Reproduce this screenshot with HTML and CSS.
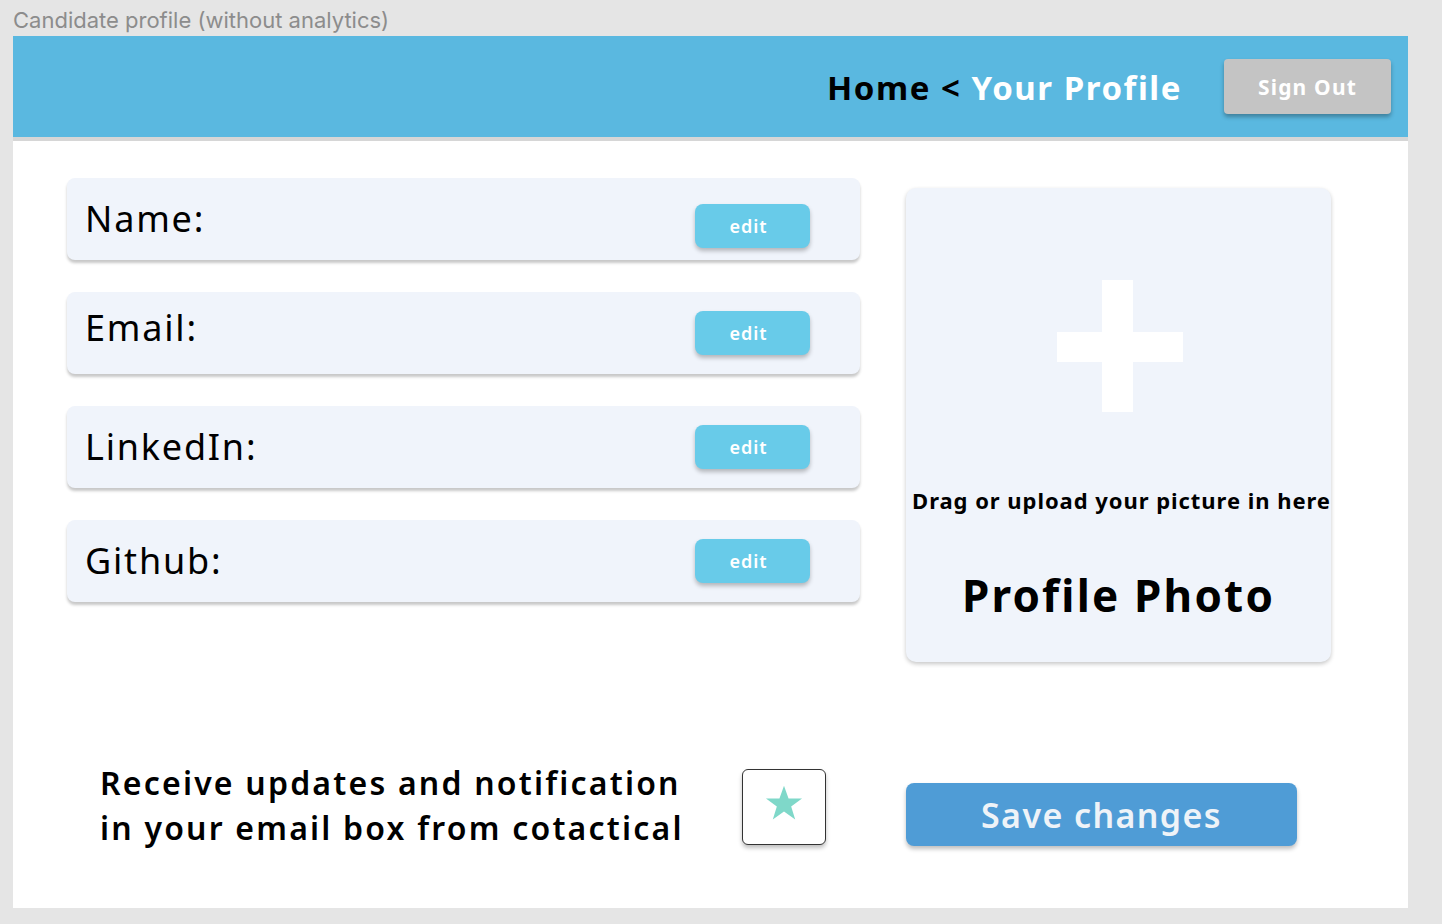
FILE: index.html
```html
<!DOCTYPE html>
<html>
<head>
<meta charset="utf-8">
<link rel="stylesheet" href="styles.css">
</head>
<body>
<div class="frame-label">Candidate profile (without analytics)</div>
<div class="frame">
  <header class="topbar">
    <nav class="crumbs"><span class="crumb-home">Home &lt;</span> <span class="crumb-current">Your Profile</span></nav>
    <button class="signout">Sign Out</button>
  </header>
  <main class="content">
    <section class="fields">
      <div class="field field-name"><span class="field-label">Name:</span><button class="edit">edit</button></div>
      <div class="field field-email"><span class="field-label">Email:</span><button class="edit">edit</button></div>
      <div class="field"><span class="field-label">LinkedIn:</span><button class="edit">edit</button></div>
      <div class="field"><span class="field-label">Github:</span><button class="edit">edit</button></div>
    </section>
    <section class="photo">
      <div class="plus"><span class="plus-v"></span><span class="plus-h"></span></div>
      <p class="photo-hint">Drag or upload your picture in here</p>
      <h2 class="photo-title">Profile Photo</h2>
    </section>
  </main>
  <footer class="bottom">
    <p class="notify">Receive updates and notification<br>in your email box from cotactical</p>
    <div class="check">
      <svg width="42" height="42" viewBox="0 0 24 24"><path d="M12 1.5l2.6 7.3h7.7l-6.2 4.6 2.3 7.4L12 16.3l-6.4 4.5 2.3-7.4L1.7 8.8h7.7z" fill="#7fd8c9"/></svg>
    </div>
    <button class="save">Save changes</button>
  </footer>
</div>
</body>
</html>
```
FILE: styles.css
```css
* { box-sizing: border-box; }
body {
  margin: 0;
  background: #e5e5e5;
  font-family: "Noto Sans", "Open Sans", sans-serif;
  width: 1442px;
  height: 924px;
  overflow: hidden;
}
.frame-label {
  height: 36px;
  padding-left: 13px;
  padding-top: 6px;
  font-family: Inter, "Noto Sans", sans-serif;
  font-size: 22px;
  color: #8c8c8c;
  line-height: 28px;
}
.frame {
  margin-left: 13px;
  width: 1395px;
  height: 872px;
  background: #ffffff;
}
.topbar {
  height: 105px;
  background: #5ab8e0;
  border-bottom: 4px solid #d6d6d6;
  display: flex;
  align-items: center;
  justify-content: flex-end;
  padding-right: 17px;
}
.crumbs {
  font-weight: 700;
  font-size: 33px;
  letter-spacing: 1.55px;
  margin-right: 42px;
  margin-top: 1px;
}
.crumb-home { color: #000; }
.crumb-current { color: #fff; }
.signout {
  width: 167px;
  height: 55px;
  background: #c4c4c4;
  border: none;
  border-radius: 4px;
  box-shadow: 0 3px 4px rgba(0,0,0,0.3);
  color: #fff;
  font-family: inherit;
  font-weight: 700;
  font-size: 21px;
  letter-spacing: 1.2px;
}
.content {
  display: flex;
  gap: 46px;
  padding: 37px 0 0 54px;
}
.fields {
  width: 793px;
  display: flex;
  flex-direction: column;
  gap: 32px;
}
.field {
  height: 82px;
  background: #f0f4fb;
  border-radius: 8px;
  box-shadow: 0 3px 3px rgba(0,0,0,0.22);
  display: flex;
  justify-content: space-between;
  padding: 0 50px 0 18px;
}
.field-label {
  font-size: 36px;
  letter-spacing: 1.8px;
  color: #000;
  line-height: 82px;
}
.field-email .field-label { margin-top: -5px; }
.edit {
  align-self: center;
  width: 115px;
  height: 44px;
  padding: 0 8px 0 0;
  background: #68cbe9;
  border: none;
  border-radius: 8px;
  box-shadow: 0 3px 4px rgba(0,0,0,0.25);
  color: #fff;
  font-family: inherit;
  font-weight: 600;
  font-size: 18px;
  letter-spacing: 1px;
}
.field-name .edit { margin-top: 14px; }
.photo {
  margin-top: 10px;
  width: 425px;
  height: 474px;
  background: #f0f4fb;
  border-radius: 10px;
  box-shadow: 0 2px 4px rgba(0,0,0,0.22);
  display: flex;
  flex-direction: column;
  align-items: center;
  padding-top: 92px;
}
.plus {
  position: relative;
  width: 126px;
  height: 132px;
  margin-left: 2px;
}
.plus-v {
  position: absolute;
  left: 45px;
  top: 0;
  width: 31px;
  height: 132px;
  background: #fff;
}
.plus-h {
  position: absolute;
  left: 0;
  top: 52px;
  width: 126px;
  height: 30px;
  background: #fff;
}
.photo-hint {
  margin: 73px 0 0 6px;
  font-weight: 700;
  font-size: 22px;
  letter-spacing: 0.95px;
  white-space: nowrap;
  color: #000;
}
.photo-title {
  margin: 50px 0 0 0;
  font-weight: 700;
  font-size: 44px;
  letter-spacing: 2.2px;
  color: #000;
}
.bottom {
  display: flex;
  align-items: flex-start;
  padding-left: 87px;
  margin-top: 98px;
}
.notify {
  margin: 0;
  width: 600px;
  font-weight: 600;
  font-size: 32px;
  line-height: 45px;
  letter-spacing: 2.2px;
  color: #000;
  white-space: nowrap;
}
.check {
  margin: 9px 0 0 42px;
  width: 84px;
  height: 76px;
  background: #fff;
  border: 1px solid #333;
  border-radius: 6px;
  box-shadow: 0 3px 4px rgba(0,0,0,0.25);
  display: flex;
  align-items: center;
  justify-content: center;
  padding-bottom: 6px;
}
.save {
  margin: 23px 0 0 80px;
  width: 391px;
  height: 63px;
  background: #4f9cd6;
  border: none;
  border-radius: 8px;
  box-shadow: 0 3px 4px rgba(0,0,0,0.25);
  color: #eef3f8;
  font-family: inherit;
  font-weight: 600;
  font-size: 34px;
  letter-spacing: 1.4px;
}
```
